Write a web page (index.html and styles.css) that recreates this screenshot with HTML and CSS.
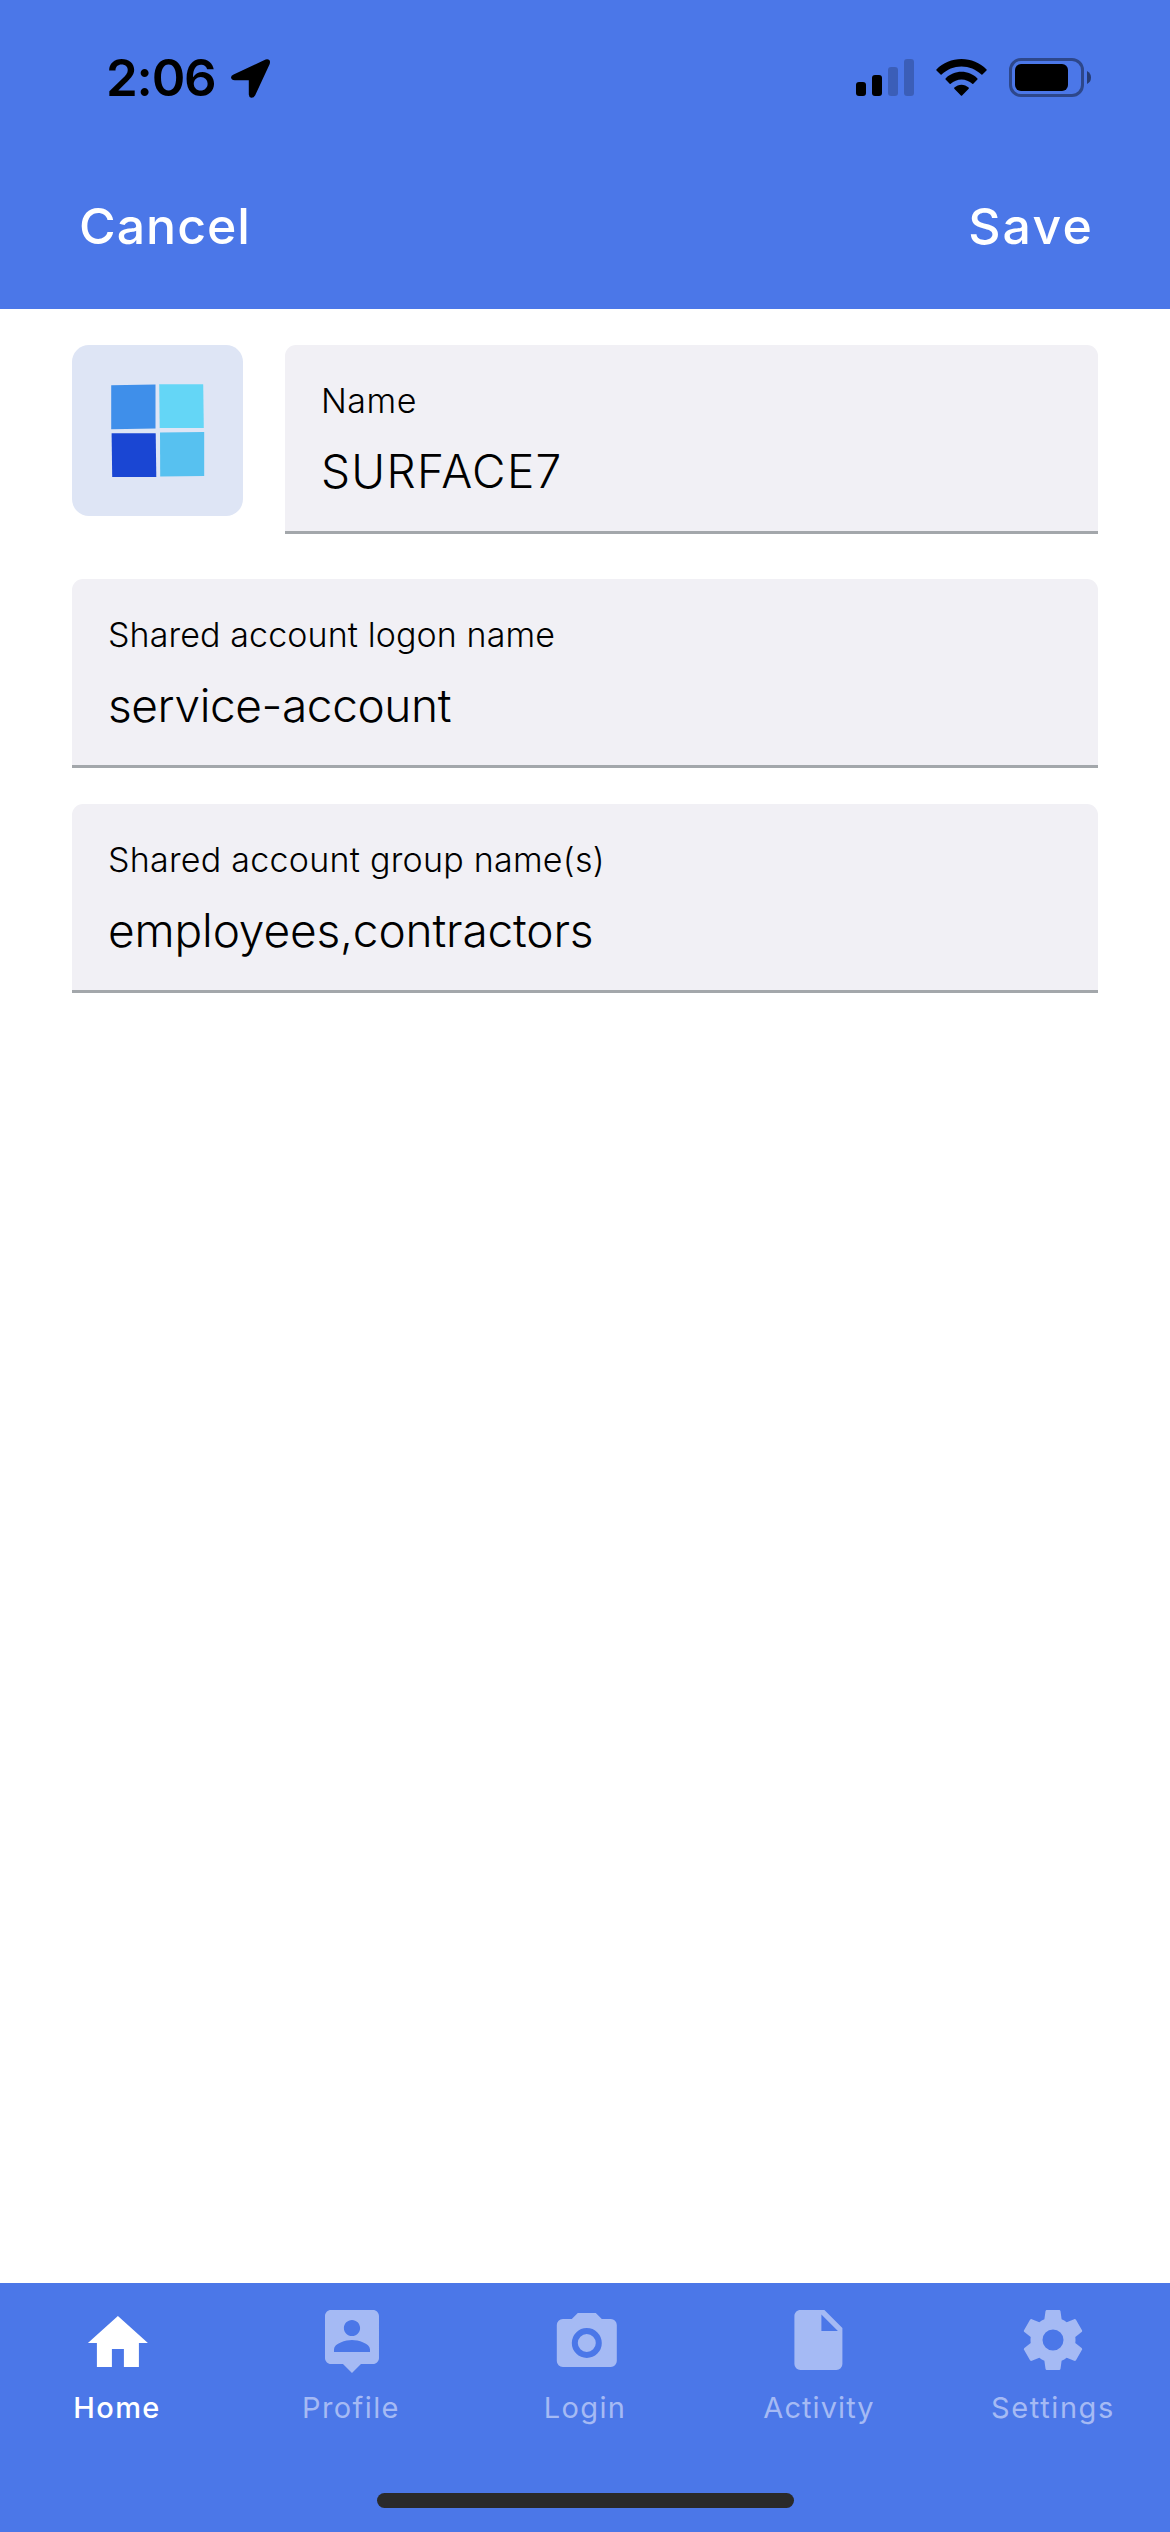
FILE: index.html
```html
<!DOCTYPE html>
<html lang="en">
<head>
<meta charset="utf-8">
<meta name="viewport" content="width=device-width">
<title>Edit device</title>
<link rel="stylesheet" href="styles.css">
</head>
<body>
<div class="screen">
  <header class="header">
    <div class="status">
      <div class="status-left">
        <span class="time">2:06</span>
        <svg class="location" width="39" height="39" viewBox="0 0 39 39"><path d="M2.6 15.6 34.6.4Q37 -.4 38.5 1.2 39.4 2.6 38.7 5L24.2 36.2Q22.8 39 20.2 38.8 18 38.4 17.8 35.4V21.3H3.8Q.3 21.1 0 18.6 0 16.8 2.6 15.6Z"/></svg>
      </div>
      <div class="status-right">
        <svg width="58" height="37" viewBox="0 0 58 37"><rect y="23" width="10" height="14" rx="3"/><rect x="16" y="16" width="10" height="21" rx="3"/><g opacity=".2"><rect x="32" y="8" width="10" height="29" rx="3"/><rect x="48" width="10" height="37" rx="3"/></g></svg>
        <svg class="wifi" width="51" height="37" viewBox="0 0 51 37"><path d="M.4 10.4Q0 11 .5 11.5L4.6 15.6Q5.1 16 5.6 15.6C11 10.4 18 7.5 25.5 7.5S40 10.4 45.4 15.6Q45.9 16 46.4 15.6L50.5 11.5Q51 11 50.6 10.4C44 3.8 35 0 25.5 0S7 3.8 .4 10.4ZM9.6 19.4Q9.1 20 9.6 20.5L13.7 24.8Q14.2 25.2 14.7 24.8C17.7 22.1 21.5 20.5 25.5 20.5S33.3 22.1 36.3 24.8Q36.8 25.2 37.3 24.8L41.4 20.5Q41.9 20 41.4 19.4C37.1 15.2 31.5 12.8 25.5 12.8S13.9 15.2 9.6 19.4ZM18.4 28.6Q17.8 29.2 18.3 29.7L24.9 36.5Q25.5 37 26.1 36.5L32.7 29.7Q33.2 29.2 32.6 28.6C30.6 26.7 28.1 25.7 25.5 25.7S20.4 26.7 18.4 28.6Z"/></svg>
        <svg width="82" height="39" viewBox="0 0 82 39"><rect x="1.5" y="1.5" width="72" height="36" rx="10.5" fill="none" stroke="#000" stroke-width="3" opacity=".4"/><rect x="6" y="6" width="53" height="27" rx="6"/><path d="M78 13Q82 15 82 19.5T78 26Z" opacity=".5"/></svg>
      </div>
    </div>
    <div class="actions">
      <span class="action cancel">Cancel</span>
      <span class="action save">Save</span>
    </div>
  </header>

  <main class="form">
    <div class="device">
      <div class="tile">
        <svg width="94" height="94" viewBox="0 0 94 94"><path fill="#3f8fea" d="M.2 1.2 44.5 .6V44.5L.2 45.2Z"/><path fill="#64d6f6" d="M48.2 .2H92.2L92.8 44.1H48.7Z"/><path fill="#1a46d3" d="M.6 49.2H44.7L45.3 93H1.2Z"/><path fill="#57c1f0" d="M49 48.6 93.2 48V92L49.2 92.6Z"/></svg>
      </div>
      <div class="field">
        <span class="label label-name">Name</span>
        <span class="value value-name">SURFACE7</span>
      </div>
    </div>
    <div class="field">
      <span class="label label-logon">Shared account logon name</span>
      <span class="value value-account">service-account</span>
    </div>
    <div class="field">
      <span class="label">Shared account group name(s)</span>
      <span class="value">employees,contractors</span>
    </div>
  </main>

  <footer class="footer">
    <nav class="tabs">
      <div class="tab active">
        <svg viewBox="0 0 24 24"><path transform="translate(.3 1)" d="M10 20V14H14V20H19V12H22L12 3 2 12H5V20Z"/></svg>
        <span>Home</span>
      </div>
      <div class="tab">
        <svg viewBox="0 0 24 24"><path transform="translate(.33)" d="M19 2H5C3.89 2 3 2.9 3 4V18C3 19.1 3.89 20 5 20H9L12 23 15 20H19C20.1 20 21 19.1 21 18V4C21 2.9 20.1 2 19 2ZM12 5.3C13.49 5.3 14.7 6.51 14.7 8S13.49 10.7 12 10.7 9.3 9.49 9.3 8 10.51 5.3 12 5.3ZM18 16H6V15.1C6 13.1 10 12 12 12S18 13.1 18 15.1Z"/></svg>
        <span>Profile</span>
      </div>
      <div class="tab">
        <svg viewBox="0 0 24 24"><path transform="translate(.6 1)" d="M4 4H7L9 2H15L17 4H20A2 2 0 0 1 22 6V18A2 2 0 0 1 20 20H4A2 2 0 0 1 2 18V6A2 2 0 0 1 4 4M12 7A5 5 0 0 0 7 12 5 5 0 0 0 12 17 5 5 0 0 0 17 12 5 5 0 0 0 12 7M12 9A3 3 0 0 1 15 12 3 3 0 0 1 12 15 3 3 0 0 1 9 12 3 3 0 0 1 12 9Z"/></svg>
        <span>Login</span>
      </div>
      <div class="tab">
        <svg viewBox="0 0 24 24"><path transform="translate(-.2)" d="M13 9V3.5L18.5 9M6 2C4.89 2 4 2.89 4 4V20A2 2 0 0 0 6 22H18A2 2 0 0 0 20 20V8L14 2H6Z"/></svg>
        <span class="activity">Activity</span>
      </div>
      <div class="tab">
        <svg viewBox="0 0 24 24"><path d="M12 15.5A3.5 3.5 0 0 1 8.5 12 3.5 3.5 0 0 1 12 8.5 3.5 3.5 0 0 1 15.5 12 3.5 3.5 0 0 1 12 15.5M19.43 12.97C19.47 12.65 19.5 12.33 19.5 12S19.47 11.34 19.43 11L21.54 9.37C21.73 9.22 21.78 8.95 21.66 8.73L19.66 5.27C19.54 5.05 19.27 4.96 19.05 5.05L16.56 6.05C16.04 5.66 15.5 5.32 14.87 5.07L14.5 2.42C14.46 2.18 14.25 2 14 2H10C9.75 2 9.54 2.18 9.5 2.42L9.13 5.07C8.5 5.32 7.96 5.66 7.44 6.05L4.95 5.05C4.73 4.96 4.46 5.05 4.34 5.27L2.34 8.73C2.21 8.95 2.27 9.22 2.46 9.37L4.57 11C4.53 11.34 4.5 11.67 4.5 12S4.53 12.65 4.57 12.97L2.46 14.63C2.27 14.78 2.21 15.05 2.34 15.27L4.34 18.73C4.46 18.95 4.73 19.03 4.95 18.95L7.44 17.94C7.96 18.34 8.5 18.68 9.13 18.93L9.5 21.58C9.54 21.82 9.75 22 10 22H14C14.25 22 14.46 21.82 14.5 21.58L14.87 18.93C15.5 18.67 16.04 18.34 16.56 17.94L19.05 18.95C19.27 19.03 19.54 18.95 19.66 18.73L21.66 15.27C21.78 15.05 21.73 14.78 21.54 14.63L19.43 12.97Z"/></svg>
        <span class="settings">Settings</span>
      </div>
    </nav>
    <div class="home-indicator"></div>
  </footer>
</div>
</body>
</html>
```

FILE: styles.css
```css
* {
  box-sizing: border-box;
}

body {
  margin: 0;
  background: #fff;
  font-family: Inter, sans-serif;
}

svg {
  display: block;
}

.screen {
  display: flex;
  flex-direction: column;
  width: 1170px;
  height: 2532px;
}

/* Header */
.header {
  height: 309px;
  background: #4b77e8;
}

.status {
  display: flex;
  justify-content: space-between;
  height: 141px;
  padding: 58px 79px 0 106px;
}

.status-left {
  display: flex;
  gap: 16px;
}

.time {
  width: 109px;
  font-size: 51px;
  font-weight: 600;
  line-height: 39px;
  letter-spacing: -1.2px;
}

.location {
  margin-top: 1px;
}

.status-right {
  display: flex;
  gap: 22px;
}

.status-right svg {
  margin-top: 1px;
}

.status-right svg:last-child {
  margin-top: 0;
}

.actions {
  display: flex;
  justify-content: space-between;
  padding: 53px 76px 0 79px;
  color: #fff;
}

.action {
  font-size: 50px;
  font-weight: 500;
  line-height: 64px;
}

.cancel {
  letter-spacing: 1px;
}

.save {
  letter-spacing: 2.2px;
}

/* Form */
.form {
  display: flex;
  flex: 1;
  flex-direction: column;
  gap: 36px;
  padding: 36px 72px 0;
}

.device {
  display: flex;
  gap: 42px;
  margin-bottom: 9px;
}

.tile {
  display: flex;
  align-items: center;
  justify-content: center;
  width: 171px;
  height: 171px;
  border-radius: 17px;
  background: #dee5f5;
}

.field {
  display: flex;
  flex-direction: column;
  height: 189px;
  padding: 35px 36px 0;
  border-bottom: 3px solid #a3a7ab;
  border-radius: 11px 11px 0 0;
  background: #f1f0f5;
  color: #000;
  font-weight: 330;
}

.device .field {
  flex: 1;
}

.label {
  font-size: 34px;
  line-height: 42px;
  letter-spacing: 0.25px;
}

.label-name {
  letter-spacing: 0.5px;
}

.label-logon {
  letter-spacing: 0.1px;
}

.value {
  margin-top: 21px;
  font-size: 46px;
  line-height: 56px;
  letter-spacing: -0.15px;
}

.value-name {
  letter-spacing: 1.3px;
}

.value-account {
  letter-spacing: -0.4px;
}

/* Tab bar */
.footer {
  height: 249px;
  padding-top: 21px;
  background: #4b77e8;
}

.tabs {
  display: grid;
  grid-template-columns: repeat(5, 1fr);
  height: 189px;
}

.tab {
  display: flex;
  flex-direction: column;
  align-items: center;
  gap: 12px;
  color: #a5baf4;
  font-size: 29px;
  line-height: 39px;
  letter-spacing: 1.4px;
}

.tab svg {
  width: 72px;
  height: 72px;
  fill: currentColor;
}

.active {
  color: #fff;
  font-weight: 500;
}

.activity {
  letter-spacing: 1.07px;
}

.settings {
  letter-spacing: 1.6px;
}

.home-indicator {
  width: 417px;
  height: 15px;
  margin: 0 auto;
  border-radius: 8px;
  background: #2a2a2a;
}
```
